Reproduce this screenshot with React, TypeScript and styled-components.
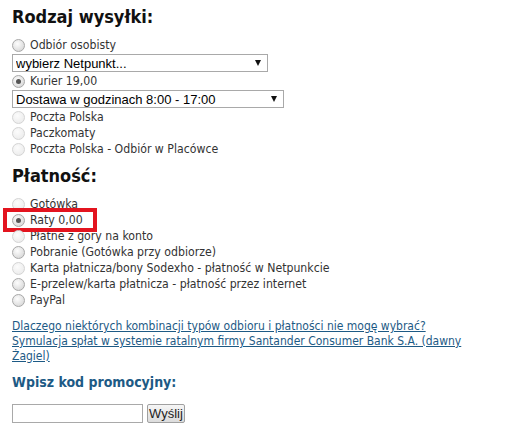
import React from "react";
import styled, { createGlobalStyle } from "styled-components";

const Global = createGlobalStyle`
  body {
    margin: 0;
    background: #fff;
    font-family: "DejaVu Sans Condensed", "DejaVu Sans", sans-serif;
    font-size: 12px;
    color: #333;
  }
`;

const Page = styled.div`
  padding: 5px 12px 0 12px;
`;

const Heading = styled.h2`
  margin: 0 0 8px 0;
  font-family: "DejaVu Sans Condensed", "DejaVu Sans", sans-serif;
  font-weight: bold;
  font-size: 18px;
  line-height: 24px;
  color: #111;
`;

const List = styled.div`
  display: flex;
  flex-direction: column;
`;

const Row = styled.label<{ $muted?: boolean }>`
  display: flex;
  align-items: center;
  height: 16px;
  gap: 5px;
  color: #333;
  font-size: 12.2px;
  white-space: nowrap;
  input {
    appearance: none;
    margin: 0;
    width: 13px;
    height: 13px;
    border-radius: 50%;
    border: 1px solid ${(p) => (p.$muted ? "#d4d4d4" : "#a8a8a8")};
    background: ${(p) =>
      p.$muted
        ? "radial-gradient(circle at 40% 35%, #fcfcfc, #e8e8e8)"
        : "radial-gradient(circle at 40% 35%, #fdfdfd, #d0d0d0)"};
    box-sizing: border-box;
    position: relative;
    flex: none;
  }
  input:checked::after {
    content: "";
    position: absolute;
    left: 3px;
    top: 3px;
    width: 5px;
    height: 5px;
    border-radius: 50%;
    background: #555;
  }
`;

const SelectWrap = styled.div<{ $w: number }>`
  position: relative;
  width: ${(p) => p.$w}px;
  height: 18px;
  margin: 1px 0;
`;

const Select = styled.select`
  appearance: none;
  width: 100%;
  height: 100%;
  box-sizing: border-box;
  border: 1px solid #a9a9a9;
  border-radius: 0;
  background: #fff;
  padding: 0 0 0 3px;
  font-family: "Liberation Sans", Arial, sans-serif;
  font-size: 13px;
  color: #000;
`;

const Arrow = styled.span`
  position: absolute;
  right: 7px;
  top: 6px;
  width: 0;
  height: 0;
  border-left: 3.5px solid transparent;
  border-right: 3.5px solid transparent;
  border-top: 6px solid #111;
  pointer-events: none;
`;

const Section = styled.div`
  margin-top: 7px;
`;

const Highlight = styled.div`
  position: absolute;
  left: -9px;
  top: -4px;
  width: 86px;
  height: 16px;
  border: 4px solid #e3141f;
  pointer-events: none;
`;

const RelRow = styled.div`
  position: relative;
`;

const Links = styled.div`
  margin-top: 11px;
  display: flex;
  flex-direction: column;
  line-height: 15px;
  width: 450px;
`;

const Link = styled.a`
  color: #1d5a85;
  text-decoration: underline;
`;

const PromoTitle = styled.h3`
  margin: 8px 0 0 0;
  font-family: "DejaVu Sans Condensed", "DejaVu Sans", sans-serif;
  font-weight: bold;
  font-size: 14px;
  line-height: 20px;
  color: #1d5a85;
`;

const PromoRow = styled.div`
  display: flex;
  gap: 4px;
  margin-top: 12px;
`;

const Input = styled.input`
  width: 131px;
  height: 19px;
  box-sizing: border-box;
  border: 1px solid #a9a9a9;
  margin: 0;
`;

const Button = styled.button`
  height: 19px;
  box-sizing: border-box;
  margin: 0;
  padding: 0 1px;
  border: 1px solid #a0a0a0;
  border-radius: 2px;
  background: linear-gradient(#f6f6f6, #dcdcdc);
  font-family: "Liberation Sans", Arial, sans-serif;
  font-size: 13px;
  color: #222;
`;

const shipping = [
  { label: "Poczta Polska", muted: true },
  { label: "Paczkomaty", muted: true },
  { label: "Poczta Polska - Odbiór w Placówce", muted: true },
];

const payments = [
  { label: "Płatne z góry na konto", muted: true },
  { label: "Pobranie (Gotówka przy odbiorze)", muted: false },
  { label: "Karta płatnicza/bony Sodexho - płatność w Netpunkcie", muted: true },
  { label: "E-przelew/karta płatnicza - płatność przez internet", muted: false },
  { label: "PayPal", muted: false },
];

export default function App() {
  return (
    <Page>
      <Global />
      <Heading>Rodzaj wysyłki:</Heading>
      <List>
        <Row>
          <input type="radio" name="ship" />
          Odbiór osobisty
        </Row>
        <SelectWrap $w={256}>
          <Select defaultValue="a">
            <option value="a">wybierz Netpunkt...</option>
          </Select>
          <Arrow />
        </SelectWrap>
        <Row>
          <input type="radio" name="ship" defaultChecked />
          Kurier 19,00
        </Row>
        <SelectWrap $w={272}>
          <Select defaultValue="a">
            <option value="a">Dostawa w godzinach 8:00 - 17:00</option>
          </Select>
          <Arrow />
        </SelectWrap>
        {shipping.map((s) => (
          <Row key={s.label} $muted={s.muted}>
            <input type="radio" name="ship" disabled />
            {s.label}
          </Row>
        ))}
      </List>

      <Section>
        <Heading>Płatność:</Heading>
        <List>
          <Row $muted>
            <input type="radio" name="pay" disabled />
            Gotówka
          </Row>
          <RelRow>
            <Row>
              <input type="radio" name="pay" defaultChecked />
              Raty 0,00
            </Row>
            <Highlight />
          </RelRow>
          {payments.map((p) => (
            <Row key={p.label} $muted={p.muted}>
              <input type="radio" name="pay" disabled={p.muted} />
              {p.label}
            </Row>
          ))}
        </List>
      </Section>

      <Links>
        <Link href="#">Dlaczego niektórych kombinacji typów odbioru i płatności nie mogę wybrać?</Link>
        <Link href="#">Symulacja spłat w systemie ratalnym firmy Santander Consumer Bank S.A. (dawny Żagiel)</Link>
      </Links>

      <PromoTitle>Wpisz kod promocyjny:</PromoTitle>
      <PromoRow>
        <Input type="text" />
        <Button>Wyślij</Button>
      </PromoRow>
    </Page>
  );
}
